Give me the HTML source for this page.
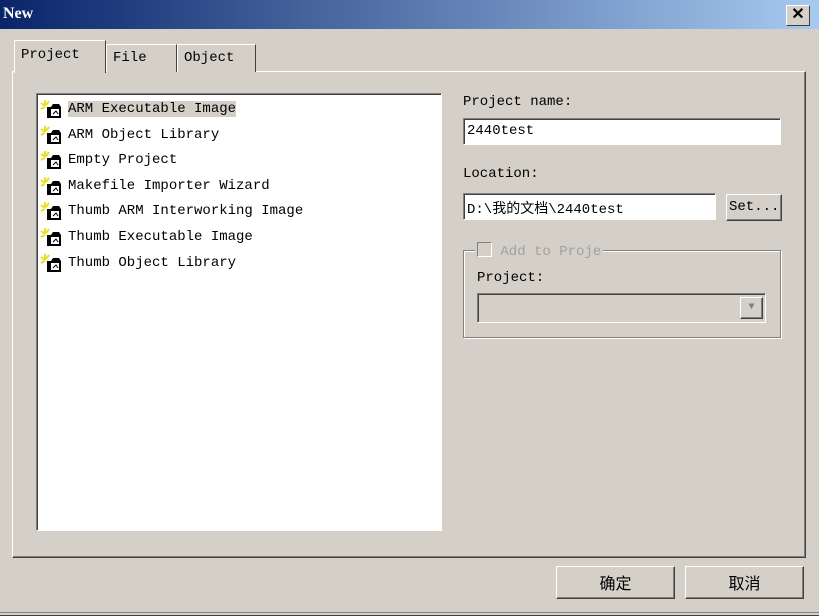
<!DOCTYPE html>
<html><head><meta charset="utf-8"><style>
*{margin:0;padding:0;box-sizing:border-box}
body{width:819px;height:616px;background:#d4d0c8;position:relative;overflow:hidden;font-family:"Liberation Mono","Noto Sans CJK SC",monospace;font-size:14px;color:#000}
.abs{position:absolute}
.title{left:0;top:0;width:819px;height:29px;background:linear-gradient(90deg,#0a246a,#a6caf0)}
.title b{position:absolute;left:3px;top:5px;color:#fff;font-family:"Liberation Serif",serif;font-size:16px;font-weight:900}
.close{left:786px;top:5px;width:24px;height:21px;background:#d4d0c8;border:1px solid;border-color:#fff #404040 #404040 #fff;font:bold 16px "Liberation Sans",sans-serif;text-align:center;line-height:18px}
.raised{border:1px solid;border-color:#fff #404040 #404040 #fff;box-shadow:inset -1px -1px #808080}
.sunk{border:1px solid;border-color:#808080 #fff #fff #808080;box-shadow:inset 1px 1px #404040}
.tab{top:44px;height:28px;border:1px solid;border-bottom:none;border-color:#fff #404040 #404040 #fff;padding:5px 0 0 6px;background:#d4d0c8}
.item{position:absolute;left:3px;height:18px;line-height:18px;padding-left:28px;white-space:pre}
.icon{position:absolute;left:0;top:0;width:27px;height:19px}
</style></head><body>
<div class="abs title"><b>New</b></div>
<div class="abs close">✕</div>
<div class="abs raised" style="left:12px;top:71px;width:794px;height:487px"></div>
<div class="abs tab" style="left:14px;top:40px;width:92px;height:33px;z-index:2;padding-top:6px">Project</div>
<div class="abs tab" style="left:106px;width:71px">File</div>
<div class="abs tab" style="left:177px;width:79px">Object</div>
<div class="abs sunk" style="left:36px;top:93px;width:406px;height:438px;background:#fff">
<div id="list"></div>
</div>
<div class="abs" style="left:463px;top:94px">Project name:</div>
<div class="abs sunk" style="left:463px;top:118px;width:318px;height:27px;background:#fff;padding:4px 0 0 3px">2440test</div>
<div class="abs" style="left:463px;top:166px">Location:</div>
<div class="abs sunk" style="left:463px;top:193px;width:253px;height:27px;background:#fff;padding:4px 0 0 3px">D:\我的文档\2440test</div>
<div class="abs raised" style="left:726px;top:194px;width:56px;height:27px;padding:4px 0 0 2px">Set...</div>
<div class="abs" style="left:463px;top:250px;width:318px;height:88px;border:1px solid #808080;box-shadow:1px 1px #fff,inset 1px 1px #fff"></div>
<div class="abs" style="left:475px;top:242px;background:#d4d0c8;padding:0 2px;color:#a0a0a0;white-space:pre"><span style="display:inline-block;width:15px;height:15px;vertical-align:-2px;border:1px solid;border-color:#808080 #fff #fff #808080"></span> Add to Proje</div>
<div class="abs" style="left:477px;top:270px">Project:</div>
<div class="abs sunk" style="left:477px;top:293px;width:289px;height:30px"></div>
<div class="abs raised" style="left:740px;top:297px;width:23px;height:22px;text-align:center;color:#808080;font-size:10px;line-height:20px">▼</div>
<div class="abs raised" style="left:556px;top:566px;width:119px;height:33px;text-align:center;line-height:30px;font-family:'Noto Sans CJK SC',sans-serif;font-size:16px">确定</div>
<div class="abs raised" style="left:685px;top:566px;width:119px;height:33px;text-align:center;line-height:30px;font-family:'Noto Sans CJK SC',sans-serif;font-size:16px">取消</div>
<div class="abs" style="left:0;top:612px;width:819px;height:4px;border-bottom:1px solid #404040;border-top:1px solid #808080"></div>
<script>
var n=["ARM Executable Image","ARM Object Library","Empty Project","Makefile Importer Wizard","Thumb ARM Interworking Image","Thumb Executable Image","Thumb Object Library"];
var h="";n.forEach(function(t,i){var y=6+i*25.6;
h+='<div class="item" style="top:'+y+'px"><svg class="icon" viewBox="0 0 27 19"><path d="M1 3l4 3M5 0v6M1 9l4-2M9 1l-3 4" stroke="#e8e020" stroke-width="2"/><path d="M7 7h4l2-3h6l2 3v11H7z" fill="#000"/><rect x="11" y="9" width="8" height="7" fill="#fff"/><path d="M13 14l3-3 2 3" stroke="#000" fill="none"/></svg><span'+(i==0?' style="background:#d4d0c8"':'')+'>'+t+'</span></div>';});
document.getElementById("list").innerHTML=h;
</script>
</body></html>
